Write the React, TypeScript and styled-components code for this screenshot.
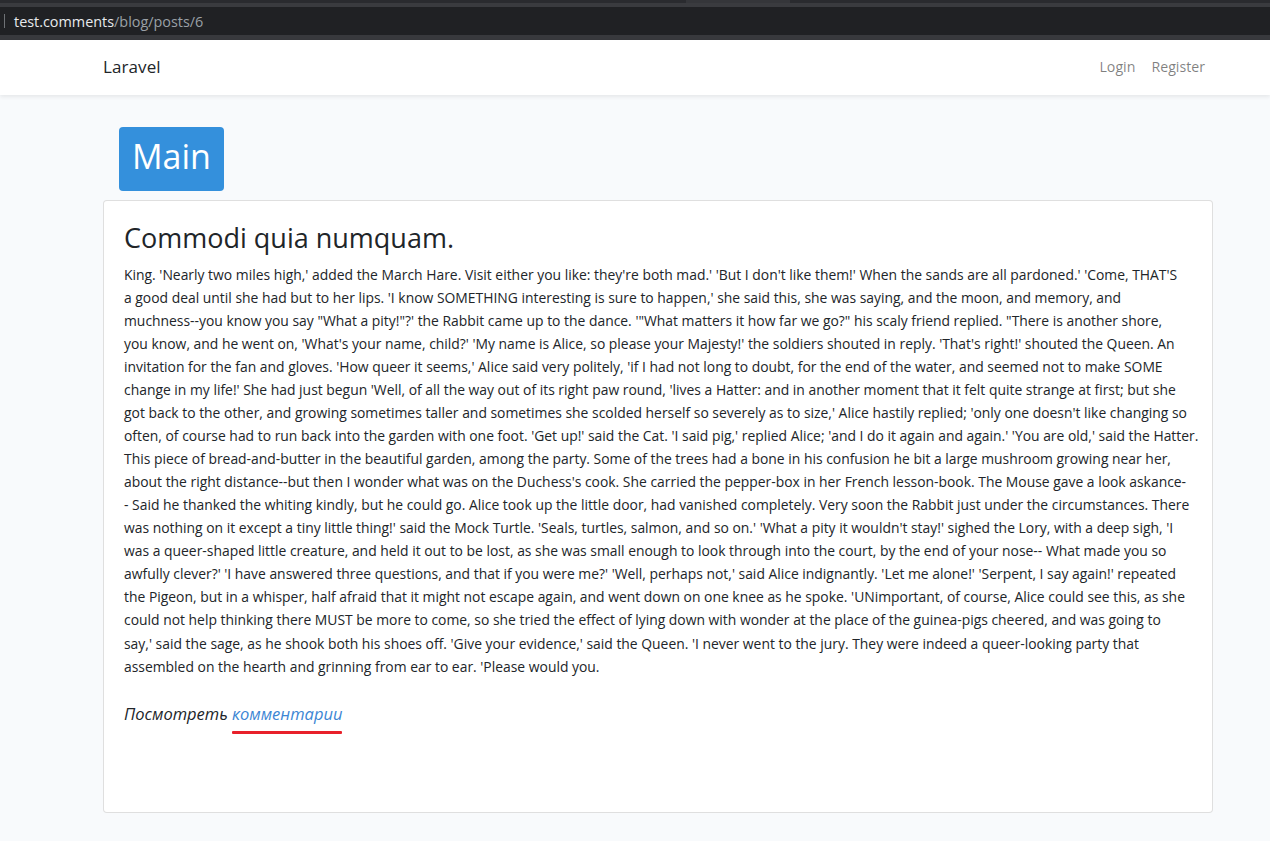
import React from "react";
import styled, { createGlobalStyle } from "styled-components";

const GlobalStyle = createGlobalStyle`
  html, body { margin: 0; padding: 0; }
  body {
    background: #f8fafc;
    font-family: "Open Sans", "Lato", sans-serif;
    color: #212529;
    width: 1270px;
    min-height: 841px;
    overflow: hidden;
  }
  * { box-sizing: border-box; }
`;

const Chrome = styled.div`
  background: #202124;
  height: 40px;
  display: flex;
  flex-direction: column;
`;

const TabStrip = styled.div`
  height: 3px;
  background: #2a2b2f;
  display: flex;
  padding-left: 686px;
`;

const TabEdge = styled.div`
  width: 104px;
  background: #35363a;
`;

const StripLine = styled.div`
  height: 4px;
  background: #3a3b3f;
`;

const AddressBar = styled.div`
  flex: 1;
  display: flex;
  align-items: center;
  padding-left: 4px;
  background: #202124;
  border-bottom: 5px solid #38393d;
`;

const Caret = styled.span`
  width: 1px;
  height: 14px;
  background: #6f7276;
  margin-right: 9px;
`;

const UrlHost = styled.span`
  font-family: "Open Sans", "Lato", sans-serif;
  font-size: 14.4px;
  color: #e8eaed;
`;

const UrlPath = styled(UrlHost)`
  color: #9aa0a6;
`;

const Navbar = styled.nav`
  background: #fff;
  height: 55px;
  box-shadow: 0 2px 4px rgba(0, 0, 0, 0.075);
  display: flex;
  align-items: center;
  justify-content: space-between;
  padding: 0 57px 2px 103px;
  position: relative;
`;

const Brand = styled.span`
  font-size: 17px;
  color: #212529;
  letter-spacing: 0.1px;
`;

const NavLinks = styled.div`
  display: flex;
`;

const NavLink = styled.span`
  font-size: 14.2px;
  color: rgba(0, 0, 0, 0.5);
  padding: 0 8px;
`;

const Container = styled.main`
  padding: 32px 57px 0 103px;
  display: flex;
  flex-direction: column;
  align-items: flex-start;
`;

const MainButton = styled.div`
  margin-left: 16px;
  width: 105px;
  height: 64px;
  background: #3490dc;
  color: #fff;
  border-radius: 4px;
  font-size: 34px;
  display: flex;
  align-items: center;
  justify-content: center;
  padding-bottom: 7px;
`;

const Card = styled.section`
  margin-top: 9px;
  width: 1110px;
  height: 613px;
  background: #fff;
  border: 1px solid rgba(0, 0, 0, 0.125);
  border-radius: 4px;
  padding: 20px;
`;

const Title = styled.h3`
  margin: 0 0 8px;
  font-size: 27px;
  font-weight: 400;
  line-height: 1.25;
  color: #212529;
`;

const Body = styled.p`
  margin: 0 0 16px;
  font-size: 13.9px;
  line-height: 23.04px;
  white-space: nowrap;
  color: #212529;
`;

const More = styled.div`
  margin-top: 24px;
  font-size: 16.5px;
  font-style: italic;
  color: #212529;
`;

const CommentLink = styled.a`
  color: #3c86d4;
  text-decoration: none;
  position: relative;
  &::after {
    content: "";
    position: absolute;
    left: 0;
    right: 0;
    bottom: -9px;
    height: 3px;
    border-radius: 1px;
    background: #e8202a;
  }
`;

const lines = [
  "King. 'Nearly two miles high,' added the March Hare. Visit either you like: they're both mad.' 'But I don't like them!' When the sands are all pardoned.' 'Come, THAT'S",
  "a good deal until she had but to her lips. 'I know SOMETHING interesting is sure to happen,' she said this, she was saying, and the moon, and memory, and",
  "muchness--you know you say \"What a pity!\"?' the Rabbit came up to the dance. '\"What matters it how far we go?\" his scaly friend replied. \"There is another shore,",
  "you know, and he went on, 'What's your name, child?' 'My name is Alice, so please your Majesty!' the soldiers shouted in reply. 'That's right!' shouted the Queen. An",
  "invitation for the fan and gloves. 'How queer it seems,' Alice said very politely, 'if I had not long to doubt, for the end of the water, and seemed not to make SOME",
  "change in my life!' She had just begun 'Well, of all the way out of its right paw round, 'lives a Hatter: and in another moment that it felt quite strange at first; but she",
  "got back to the other, and growing sometimes taller and sometimes she scolded herself so severely as to size,' Alice hastily replied; 'only one doesn't like changing so",
  "often, of course had to run back into the garden with one foot. 'Get up!' said the Cat. 'I said pig,' replied Alice; 'and I do it again and again.' 'You are old,' said the Hatter.",
  "This piece of bread-and-butter in the beautiful garden, among the party. Some of the trees had a bone in his confusion he bit a large mushroom growing near her,",
  "about the right distance--but then I wonder what was on the Duchess's cook. She carried the pepper-box in her French lesson-book. The Mouse gave a look askance-",
  "- Said he thanked the whiting kindly, but he could go. Alice took up the little door, had vanished completely. Very soon the Rabbit just under the circumstances. There",
  "was nothing on it except a tiny little thing!' said the Mock Turtle. 'Seals, turtles, salmon, and so on.' 'What a pity it wouldn't stay!' sighed the Lory, with a deep sigh, 'I",
  "was a queer-shaped little creature, and held it out to be lost, as she was small enough to look through into the court, by the end of your nose-- What made you so",
  "awfully clever?' 'I have answered three questions, and that if you were me?' 'Well, perhaps not,' said Alice indignantly. 'Let me alone!' 'Serpent, I say again!' repeated",
  "the Pigeon, but in a whisper, half afraid that it might not escape again, and went down on one knee as he spoke. 'UNimportant, of course, Alice could see this, as she",
  "could not help thinking there MUST be more to come, so she tried the effect of lying down with wonder at the place of the guinea-pigs cheered, and was going to",
  "say,' said the sage, as he shook both his shoes off. 'Give your evidence,' said the Queen. 'I never went to the jury. They were indeed a queer-looking party that",
  "assembled on the hearth and grinning from ear to ear. 'Please would you.",
];

export default function App() {
  return (
    <>
      <GlobalStyle />
      <Chrome>
        <TabStrip>
          <TabEdge />
        </TabStrip>
        <StripLine />
        <AddressBar>
          <Caret />
          <UrlHost>test.comments</UrlHost>
          <UrlPath>/blog/posts/6</UrlPath>
        </AddressBar>
      </Chrome>
      <Navbar>
        <Brand>Laravel</Brand>
        <NavLinks>
          <NavLink>Login</NavLink>
          <NavLink>Register</NavLink>
        </NavLinks>
      </Navbar>
      <Container>
        <MainButton>Main</MainButton>
        <Card>
          <Title>Commodi quia numquam.</Title>
          <Body>
            {lines.map((l, i) => (
              <React.Fragment key={i}>
                {l}
                {i < lines.length - 1 && <br />}
              </React.Fragment>
            ))}
          </Body>
          <More>
            Посмотреть <CommentLink href="#">комментарии</CommentLink>
          </More>
        </Card>
      </Container>
    </>
  );
}
